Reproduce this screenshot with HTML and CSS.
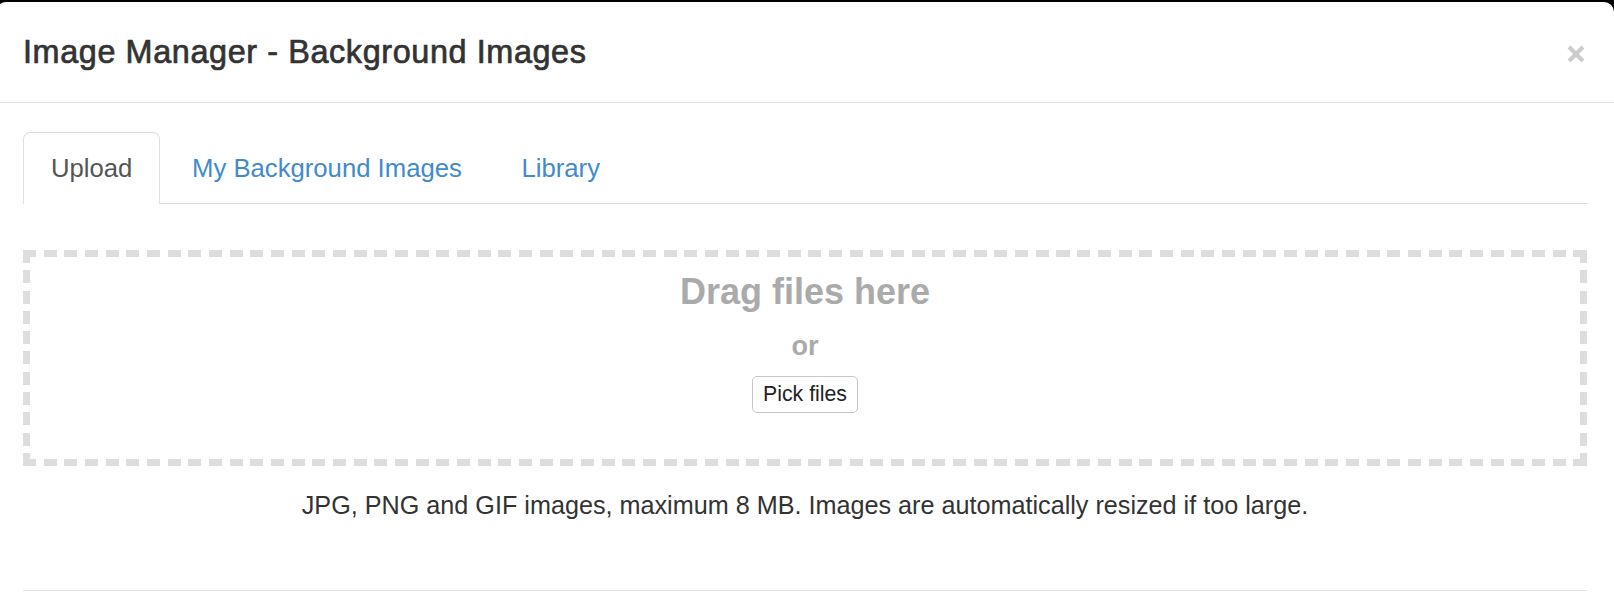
FILE: index.html
```html
<!DOCTYPE html>
<html lang="en">
<head>
    <meta charset="UTF-8">
    <meta name="viewport" content="width=device-width, initial-scale=1.0">
    <title>Image Manager - Background Images</title>
    <link rel="stylesheet" href="styles.css">
</head>
<body>
    <div class="modal">
        <!-- Header -->
        <div class="modal-header">
            <h4 class="modal-title">Image Manager - Background Images</h4>
            <button class="close" aria-label="Close">
                <svg width="18" height="18" viewBox="0 0 18 18">
                    <path d="M2 2 L16 16 M16 2 L2 16" stroke="#cccccc" stroke-width="4.2" fill="none" />
                </svg>
            </button>
        </div>

        <!-- Body -->
        <div class="modal-body">
            <ul class="nav-tabs">
                <li class="active"><a href="#">Upload</a></li>
                <li><a href="#">My Background Images</a></li>
                <li><a href="#">Library</a></li>
            </ul>

            <div class="tab-content">
                <div class="dropzone">
                    <div class="drop-title">Drag files here</div>
                    <div class="drop-or">or</div>
                    <button class="pick-btn">Pick files</button>
                </div>
                <p class="help-text">JPG, PNG and GIF images, maximum 8 MB. Images are automatically resized if too large.</p>
                <hr class="divider">
            </div>
        </div>
    </div>
</body>
</html>
```

FILE: styles.css
```css
/* Reset */
* {
    margin: 0;
    padding: 0;
    box-sizing: border-box;
}

body {
    font-family: "Liberation Sans", Arial, Helvetica, sans-serif;
    font-size: 25.2px;
    background-color: #000; /* backdrop strip above the modal */
    color: #333;
    overflow: hidden;
}

.modal {
    margin: 2px 0 0 -4px;
    background: #fff;
    border-radius: 10px 10px 0 0;
    height: 598px;
}

/* Header */
.modal-header {
    display: flex;
    justify-content: space-between;
    align-items: center;
    padding: 27px;
    border-bottom: 1px solid #e5e5e5;
}

.modal-title {
    font-size: 32.4px;
    line-height: 46.3px;
    font-weight: normal;
    letter-spacing: 0.6px;
    color: #333;
    -webkit-text-stroke: 0.7px #333; /* medium weight look */
}

.close {
    border: none;
    background: none;
    width: 18px;
    height: 18px;
    margin: 3px 2px 0 0;
    cursor: pointer;
}

.close svg {
    display: block;
}

/* Body */
.modal-body {
    padding: 27px 27px 0 27px;
}

.nav-tabs {
    display: flex;
    list-style: none;
    margin-top: 2px;
    border-bottom: 1px solid #ddd;
    font-size: 25.7px;
}

.nav-tabs li {
    margin-bottom: -1px;
}

.nav-tabs a {
    display: block;
    padding: 17px 27px;
    margin-right: 3.6px;
    line-height: 36px;
    border: 1px solid transparent;
    border-radius: 7px 7px 0 0;
    color: #428bca;
    text-decoration: none;
}

.nav-tabs .active a {
    color: #555;
    background: #fff;
    border-color: #ddd;
    border-bottom-color: transparent;
}

/* Drop area */
.dropzone {
    margin-top: 46px;
    height: 216px;
    padding: 24px 7px 7px 7px;
    display: flex;
    flex-direction: column;
    align-items: center;
    background:
        repeating-linear-gradient(to right, #ddd 0 13px, transparent 13px 20.67px) top left / 100% 7px no-repeat,
        repeating-linear-gradient(to right, #ddd 0 13px, transparent 13px 20.67px) bottom left / 100% 7px no-repeat,
        repeating-linear-gradient(to bottom, #ddd 0 13px, transparent 13px 20.3px) top left / 7px 100% no-repeat,
        repeating-linear-gradient(to bottom, #ddd 0 13px, transparent 13px 20.3px) top right / 7px 100% no-repeat;
}

.drop-title {
    font-size: 36px;
    line-height: 36px;
    font-weight: bold;
    color: #aaa;
}

.drop-or {
    margin-top: 18px;
    font-size: 27px;
    line-height: 36px;
    font-weight: bold;
    color: #aaa;
}

.pick-btn {
    margin-top: 12px;
    height: 37px;
    padding: 0 10px;
    font-family: "Liberation Sans", Arial, sans-serif;
    font-size: 21.3px;
    color: #222;
    background: #fff;
    border: 1px solid #c6c6c6;
    border-radius: 5px;
    cursor: pointer;
}

.help-text {
    margin-top: 21px;
    line-height: 36px;
    text-align: center;
    color: #333;
}

.divider {
    border: none;
    border-top: 1px solid #e5e5e5;
    margin-top: 67px;
}
```
